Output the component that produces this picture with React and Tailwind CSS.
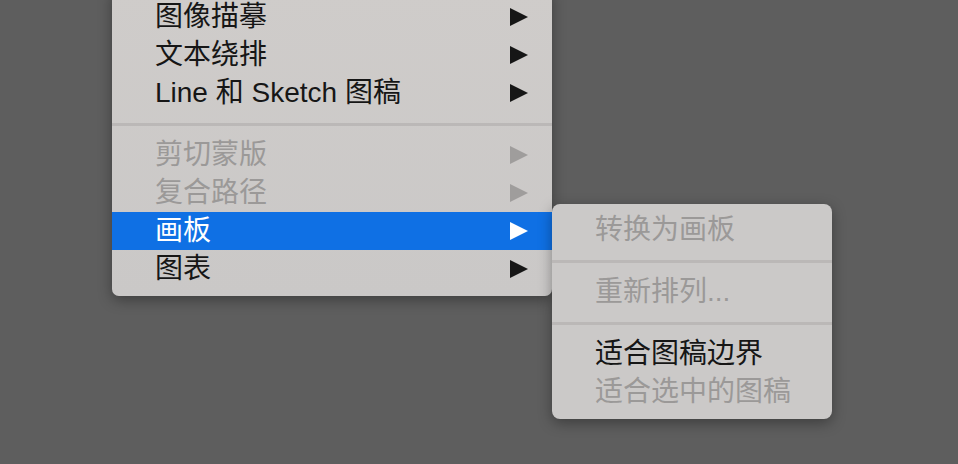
import React from "react";

const font = { fontFamily: '"Liberation Sans", "Noto Sans CJK SC", sans-serif' };

function Arrow({ color }) {
  return (
    <svg width="18" height="18" viewBox="0 0 18 18" className="shrink-0">
      <polygon points="0,0 18,9 0,18" fill={color} />
    </svg>
  );
}

function Row({ label, state = "normal", arrow = false }) {
  const text =
    state === "active" ? "text-white" : state === "disabled" ? "text-[#9b9998]" : "text-[#161616]";
  const arrowColor = state === "active" ? "#ffffff" : state === "disabled" ? "#9f9d9c" : "#161616";
  return (
    <div
      className={`flex h-[38px] items-center pl-[43px] pr-[24px] ${state === "active" ? "bg-[#0f70e4]" : ""}`}
    >
      <span className={`flex-1 text-[28px] leading-none whitespace-nowrap ${text}`}>{label}</span>
      {arrow && <Arrow color={arrowColor} />}
    </div>
  );
}

function Sep() {
  return (
    <div className="flex h-[24px] flex-col justify-center">
      <div className="h-[3px] bg-[#bbb8b7]" />
    </div>
  );
}

export default function App() {
  return (
    <div className="relative h-[464px] w-[958px] overflow-hidden bg-[#5e5e5e]" style={font}>
      <div className="ml-[112px] mt-[-10px] w-[440px] rounded-b-[7px] bg-gradient-to-b from-[#cfccca] to-[#cac8c7] pb-[8px] pt-[8px] shadow-[0_4px_14px_rgba(0,0,0,0.35)]">
        <Row label="图像描摹" arrow />
        <Row label="文本绕排" arrow />
        <Row label="Line 和 Sketch 图稿" arrow />
        <Sep />
        <Row label="剪切蒙版" state="disabled" arrow />
        <Row label="复合路径" state="disabled" arrow />
        <Row label="画板" state="active" arrow />
        <Row label="图表" arrow />
      </div>
      <div className="absolute left-[552px] top-[204px] w-[280px] rounded-[8px] bg-[#cbc9c8] pb-[8px] pt-[7px] shadow-[0_4px_14px_rgba(0,0,0,0.35)]">
        <Row label="转换为画板" state="disabled" />
        <Sep />
        <Row label="重新排列..." state="disabled" />
        <Sep />
        <Row label="适合图稿边界" />
        <Row label="适合选中的图稿" state="disabled" />
      </div>
    </div>
  );
}
